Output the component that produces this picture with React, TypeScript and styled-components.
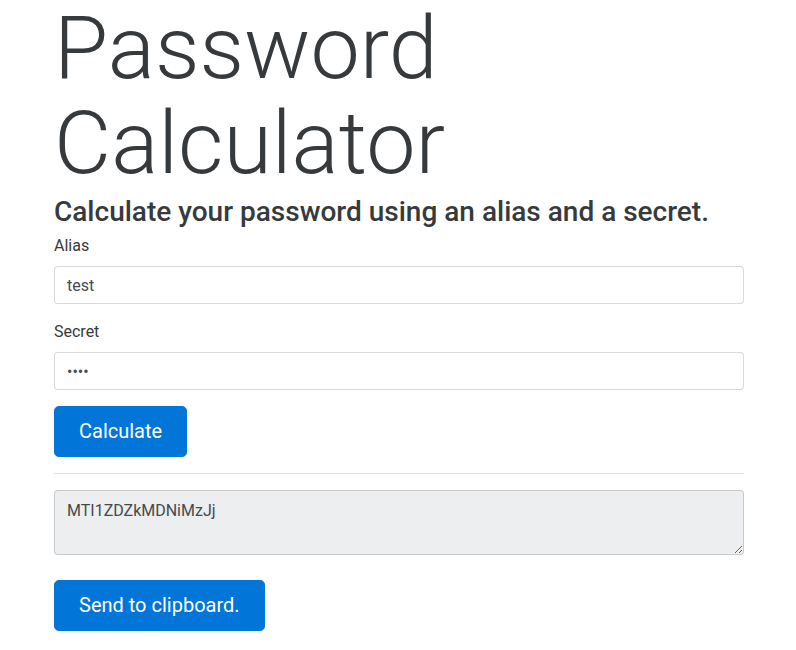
import React from "react";
import styled, { createGlobalStyle } from "styled-components";

const Global = createGlobalStyle`
  html, body { margin: 0; padding: 0; background: #fff; }
  body {
    font-family: Roboto, "Noto Sans", "Liberation Sans", sans-serif;
    font-size: 16px;
    line-height: 1.5;
    color: #373a3c;
  }
  * { box-sizing: border-box; }
`;

const Container = styled.main`
  width: 690px;
  margin-left: 54px;
  display: flex;
  flex-direction: column;
`;

const Title = styled.h1`
  margin: 0;
  font-size: 88px;
  font-weight: 300;
  line-height: 95px;
  color: #373a3c;
  letter-spacing: 0;
`;

const Subtitle = styled.h3`
  margin: 6px 0 7px;
  font-size: 28px;
  font-weight: 500;
  line-height: 31px;
  color: #373a3c;
`;

const Field = styled.div`
  display: flex;
  flex-direction: column;
  margin-bottom: ${(p: { $mb: number }) => p.$mb}px;
`;

const Label = styled.label`
  font-size: 16px;
  line-height: 24px;
  margin-bottom: 8px;
  color: #373a3c;
`;

const Input = styled.input`
  height: 38px;
  width: 100%;
  padding: 0 12px;
  font-family: inherit;
  font-size: 16px;
  color: #464a4c;
  background: #fff;
  border: 1px solid rgba(0, 0, 0, 0.15);
  border-radius: 4px;
  outline: none;
`;

const Output = styled.textarea`
  display: block;
  height: 65px;
  width: 100%;
  padding: 8px 12px 6px;
  font-family: inherit;
  font-size: 16px;
  line-height: 24px;
  color: #464a4c;
  background: #eceeef;
  border: 1px solid rgba(0, 0, 0, 0.15);
  border-radius: 4px;
  outline: none;
`;

const Button = styled.button`
  align-self: flex-start;
  height: 51px;
  padding: 0 24px;
  font-family: inherit;
  font-size: 20px;
  line-height: 25px;
  color: #fff;
  background: #0275d8;
  border: 1px solid #0275d8;
  border-radius: 4.8px;
  cursor: pointer;
`;

const Divider = styled.hr`
  width: 100%;
  margin: 16px 0;
  border: 0;
  border-top: 1px solid rgba(0, 0, 0, 0.1);
`;

export default function App() {
  return (
    <>
      <Global />
      <Container>
        <Title>
          Password
          <br />
          Calculator
        </Title>
        <Subtitle>Calculate your password using an alias and a secret.</Subtitle>
        <Field $mb={16}>
          <Label htmlFor="alias">Alias</Label>
          <Input id="alias" type="text" defaultValue="test" />
        </Field>
        <Field $mb={16}>
          <Label htmlFor="secret">Secret</Label>
          <Input id="secret" type="password" defaultValue="test" />
        </Field>
        <Button>Calculate</Button>
        <Divider />
        <Field $mb={25}>
          <Output readOnly value="MTI1ZDZkMDNiMzJj" />
        </Field>
        <Button>Send to clipboard.</Button>
      </Container>
    </>
  );
}
